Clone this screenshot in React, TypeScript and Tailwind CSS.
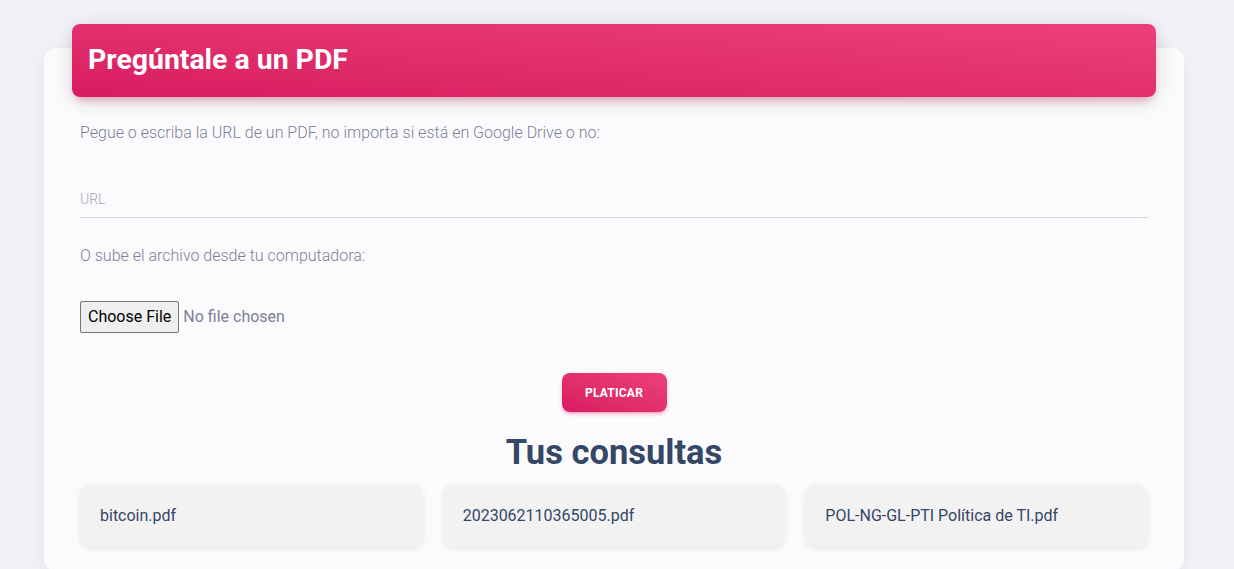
import React from "react";

const consultas = [
  "bitcoin.pdf",
  "2023062110365005.pdf",
  "POL-NG-GL-PTI Política de TI.pdf",
];

const App = () => {
  return (
    <div className="min-h-screen bg-[#f0f2f5] font-['Roboto',sans-serif] pt-12">
      <div className="flow-root ml-[44px] w-[1140px] bg-[#fbfbfd] rounded-xl shadow-[0_4px_20px_rgba(0,0,0,0.05)] px-9 pb-6">
        {/* header */}
        <div className="-mt-6 -mx-2 h-[73px] rounded-lg bg-gradient-to-tr from-[#d81b60] to-[#ec407a] shadow-[0_4px_20px_0_rgba(0,0,0,0.14),0_7px_10px_-5px_rgba(233,30,99,0.4)] flex items-center px-4">
          <h1 className="text-[28.4px] font-bold text-white">Pregúntale a un PDF</h1>
        </div>

        <p className="mt-6 text-base leading-6 font-light text-[#7b809a]">
          Pegue o escriba la URL de un PDF, no importa si está en Google Drive o no:
        </p>

        <input
          type="text"
          placeholder="URL"
          className="mt-[44px] block w-full border-b border-[#d2d6da] bg-transparent pb-2 text-sm leading-5 font-light text-[#495057] placeholder:text-[#a3a7b5] outline-none"
        />

        <p className="mt-[26px] text-base leading-6 font-light text-[#7b809a]">
          O sube el archivo desde tu computadora:
        </p>

        <div className="mt-[33px] flex">
          <input
            type="file"
            className="text-base text-[#7b809a] file:mr-1 file:border file:border-[#767676] file:bg-[#efefef] file:rounded-[2px] file:px-[7px] file:py-[3px] file:text-black file:text-base"
          />
        </div>

        <div className="mt-10 flex justify-center">
          <button className="h-[39px] w-[105px] rounded-lg bg-gradient-to-tr from-[#d81b60] to-[#ec407a] text-white text-xs font-bold tracking-[0.02em] shadow-[0_3px_3px_0_rgba(233,30,99,0.15),0_3px_1px_-2px_rgba(233,30,99,0.2),0_1px_5px_0_rgba(233,30,99,0.15)]">
            PLATICAR
          </button>
        </div>

        <h2 className="mt-[18px] text-center text-[34.5px] font-bold text-[#344767] leading-[44px]">
          Tus consultas
        </h2>

        <div className="mt-[10px] grid grid-cols-3 gap-5">
          {consultas.map((c) => (
            <div
              key={c}
              className="h-[63px] rounded-xl bg-[#f2f2f2] shadow-[0_2px_6px_rgba(0,0,0,0.08)] flex items-center px-5 text-base text-[#344767]"
            >
              {c}
            </div>
          ))}
        </div>
      </div>
    </div>
  );
};

export default App;
